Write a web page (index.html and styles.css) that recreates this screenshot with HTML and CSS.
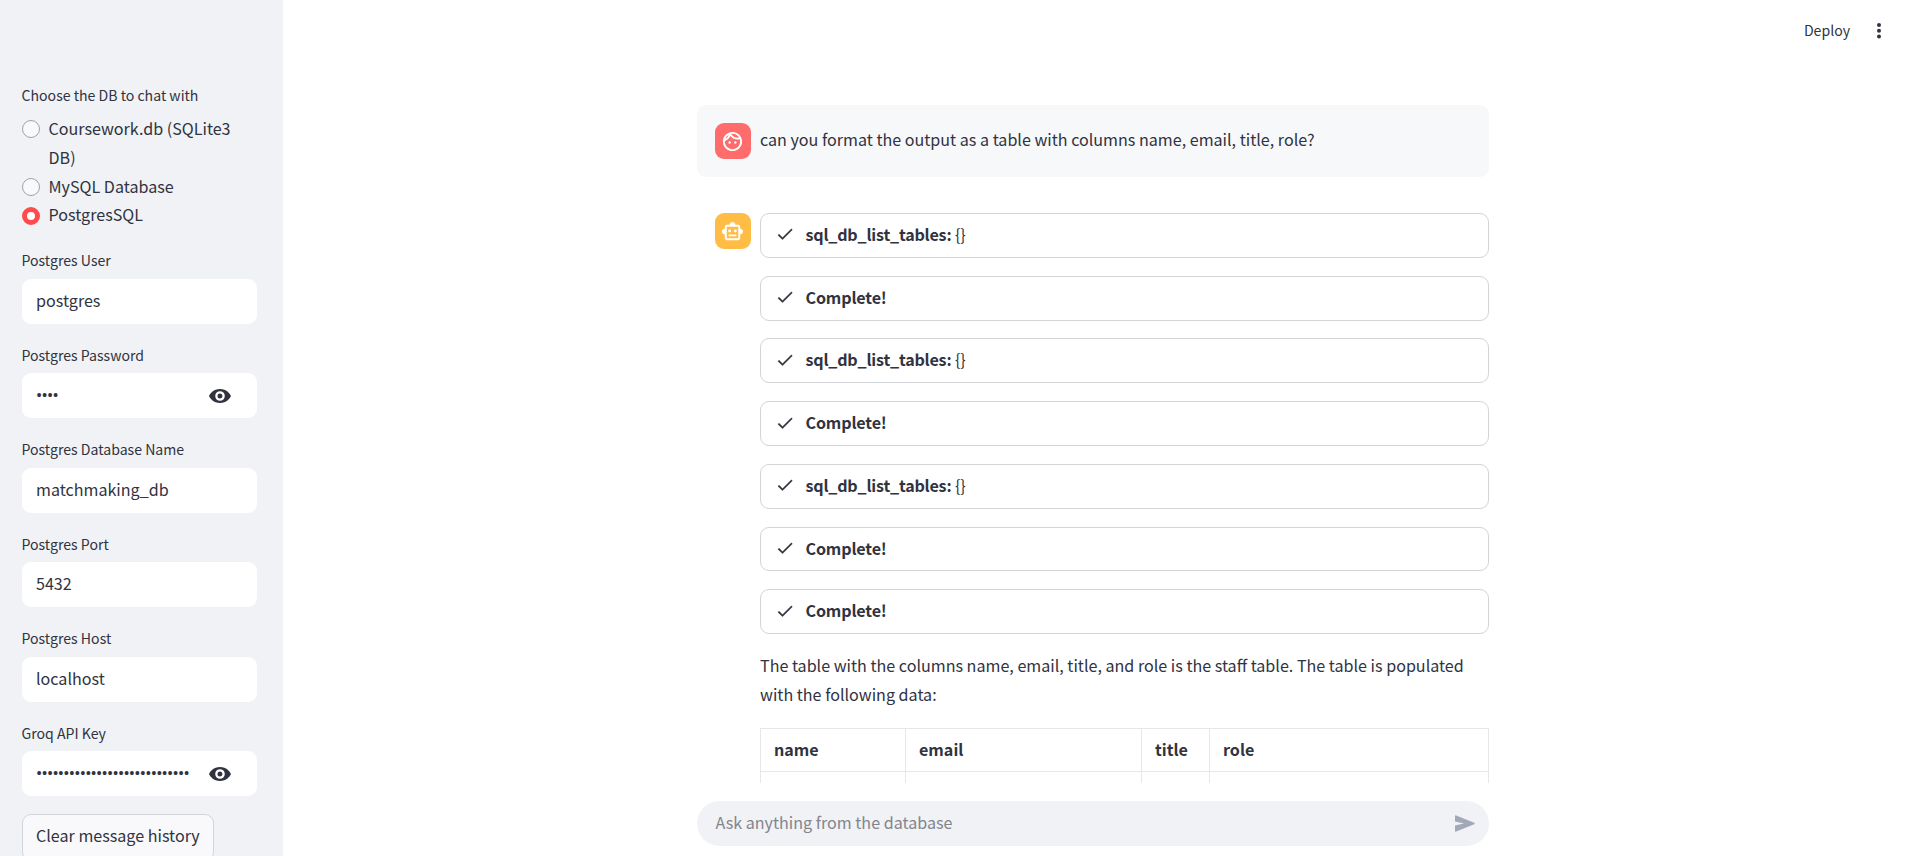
FILE: index.html
```html
<!DOCTYPE html>
<html lang="en">
<head>
<meta charset="utf-8">
<title>Chat with DB</title>
<link rel="stylesheet" href="styles.css">
</head>
<body>
<svg class="defs" width="0" height="0" aria-hidden="true">
  <symbol id="check" viewBox="0 0 24 24"><path d="M9 16.17 4.83 12l-1.42 1.41L9 19 21 7l-1.41-1.41z"/></symbol>
  <symbol id="eye" viewBox="0 0 22 14"><path d="M11 0C4.500 0 1.200 4.400 0 7c1.200 2.600 4.500 7 11 7s9.800-4.400 11-7C20.800 4.400 17.500 0 11 0zM11 2.200a4.800 4.800 0 1 1 0 9.600 4.800 4.800 0 0 1 0-9.600zM11 4.500a2.500 2.500 0 1 0 0 5 2.500 2.500 0 0 0 0-5z" fill-rule="evenodd"/></symbol>
</svg>
<div class="app">
  <aside class="sidebar">
    <div class="label">Choose the DB to chat with</div>
    <div class="radios">
      <div class="radio"><span class="dot"></span><span>Coursework.db (SQLite3 DB)</span></div>
      <div class="radio"><span class="dot"></span><span>MySQL Database</span></div>
      <div class="radio"><span class="dot on"></span><span>PostgresSQL</span></div>
    </div>
    <div class="field"><div class="label">Postgres User</div><div class="input">postgres</div></div>
    <div class="field"><div class="label">Postgres Password</div><div class="input"><span class="secret">••••</span><svg class="eye"><use href="#eye"/></svg></div></div>
    <div class="field"><div class="label">Postgres Database Name</div><div class="input">matchmaking_db</div></div>
    <div class="field"><div class="label">Postgres Port</div><div class="input">5432</div></div>
    <div class="field"><div class="label">Postgres Host</div><div class="input">localhost</div></div>
    <div class="field"><div class="label">Groq API Key</div><div class="input"><span class="secret">••••••••••••••••••••••••••••</span><svg class="eye"><use href="#eye"/></svg></div></div>
    <div class="button">Clear message history</div>
  </aside>
  <main class="main">
    <header class="header">
      <span class="deploy">Deploy</span>
      <svg class="more" viewBox="0 0 6 18"><circle cx="3" cy="3" r="2"/><circle cx="3" cy="8.8" r="2"/><circle cx="3" cy="14.6" r="2"/></svg>
    </header>
    <section class="chat">
      <div class="message user">
        <div class="avatar red"><svg viewBox="0 0 24 24"><path d="M10.25 13a1.25 1.25 0 1 1-2.5 0 1.25 1.25 0 0 1 2.5 0zM15 11.75a1.25 1.25 0 1 0 0 2.5 1.25 1.25 0 0 0 0-2.5zM22 12c0 5.52-4.48 10-10 10S2 17.52 2 12 6.48 2 12 2s10 4.48 10 10zM10.66 4.12C12.06 6.44 14.6 8 17.5 8c.46 0 .91-.05 1.34-.12C17.44 5.56 14.9 4 12 4c-.46 0-.91.05-1.34.12zM4.42 9.47a8.05 8.05 0 0 0 3.66-4.44 8.05 8.05 0 0 0-3.66 4.44zM20 12c0-.78-.12-1.53-.33-2.24-.7.15-1.42.24-2.17.24a10 10 0 0 1-7.76-3.69A10.02 10.02 0 0 1 4 11.86V12c0 4.41 3.59 8 8 8s8-3.590 8-8z" fill-rule="evenodd"/></svg></div>
        <p class="text">can you format the output as a table with columns name, email, title, role?</p>
      </div>
      <div class="message">
        <div class="avatar orange"><svg viewBox="0 0 24 24"><path d="M20 9V7c0-1.100-.9-2-2-2h-3c0-1.660-1.340-3-3-3S9 3.340 9 5H6c-1.100 0-2 .9-2 2v2c-1.660 0-3 1.340-3 3s1.340 3 3 3v4c0 1.100.9 2 2 2h12c1.100 0 2-.9 2-2v-4c1.660 0 3-1.340 3-3s-1.340-3-3-3zm-2 10H6V7h12v12zm-9-6a1.500 1.500 0 1 1 0-3 1.500 1.500 0 0 1 0 3zm7.500-1.500a1.500 1.500 0 1 1-3 0 1.500 1.500 0 0 1 3 0zM8 15h8v2H8z" fill-rule="evenodd"/></svg></div>
        <div class="content">
          <div class="status"><svg><use href="#check"/></svg><b class="tool">sql_db_list_tables:</b><span class="args">{}</span></div>
          <div class="status"><svg><use href="#check"/></svg><b>Complete!</b></div>
          <div class="status"><svg><use href="#check"/></svg><b class="tool">sql_db_list_tables:</b><span class="args">{}</span></div>
          <div class="status"><svg><use href="#check"/></svg><b>Complete!</b></div>
          <div class="status"><svg><use href="#check"/></svg><b class="tool">sql_db_list_tables:</b><span class="args">{}</span></div>
          <div class="status"><svg><use href="#check"/></svg><b>Complete!</b></div>
          <div class="status"><svg><use href="#check"/></svg><b>Complete!</b></div>
          <p class="text answer">The table with the columns name, email, title, and role is the staff table. The table is populated<br>with the following data:</p>
          <table class="table">
            <colgroup><col class="c-name"><col class="c-email"><col class="c-title"><col></colgroup>
            <tr><th>name</th><th>email</th><th>title</th><th>role</th></tr>
            <tr><td></td><td></td><td></td><td></td></tr>
          </table>
        </div>
      </div>
    </section>
    <footer class="footer">
      <div class="ask"><span>Ask anything from the database</span>
        <svg class="send" viewBox="0 0 20 18"><path d="M0 1.200Q0 0 1.200.4L19.200 7.800Q20.400 8.500 19.200 9.200L1.200 16.600Q0 17 0 15.800V10.600L9 8.500 0 6.400z"/></svg>
      </div>
    </footer>
  </main>
</div>
</body>
</html>
```
FILE: styles.css
```css
* { box-sizing: border-box; }
body {
  margin: 0;
  background: #fff;
  color: #31333f;
  font-family: "Noto Sans CJK SC", "Noto Sans", sans-serif;
  font-size: 16.1px;
  line-height: 28.8px;
}
.defs { position: absolute; }
.app { display: flex; height: 856px; overflow: hidden; }
.sidebar {
  width: 283px;
  flex: none;
  height: 856px;
  overflow: hidden;
  padding: 82px 26px 0 22px;
  background: #f0f2f6;
}
.label { margin-left: -0.5px; font-size: 14.1px; line-height: 26px; height: 31.5px; }
.radios { margin-bottom: 17.4px; padding-top: 1px; }
.radio { display: flex; gap: 8.5px; width: 228px; }
.radio span:last-child { margin-top: -0.6px; margin-bottom: 0.7px; }
.dot {
  flex: none;
  width: 18px;
  height: 18px;
  margin-top: 5.8px;
  border-radius: 50%;
  background: #f9f9fb;
  border: 1px solid #9fa2ab;
}
.radio .dot.on { background: #fff; border: 5.5px solid #ff4b4b; }
.field { margin-bottom: 18px; }
.input {
  display: flex;
  align-items: center;
  height: 45px;
  padding: 0 26.500px 2px 14px;
  border-radius: 9px;
  background: #fff;
}
.secret { font-family: Roboto, sans-serif; font-size: 18.5px; letter-spacing: -0.78px; padding-top: 2.500px; }
.eye { width: 22px; height: 14px; margin-left: auto; margin-top: 1.6px; fill: #31333f; }
.button {
  width: 192px;
  height: 47px;
  padding: 6px 0 0 13px;
  border: 1px solid #d3d5d9;
  border-radius: 9px;
  background: #f9f9fb;
  white-space: nowrap;
}
.main { flex: 1; display: flex; flex-direction: column; padding-right: 9px; }
.header {
  display: flex;
  justify-content: flex-end;
  align-items: center;
  flex: none;
  height: 62px;
  padding-right: 21px;
  gap: 26px;
}
.deploy { font-size: 14.1px; padding-bottom: 2px; }
.more { width: 6px; height: 18px; fill: #31333f; }
.chat { width: 792px; height: 721px; margin: 0 auto; padding-top: 43px; overflow: hidden; }
.message { display: flex; gap: 9px; padding: 18px 0 18px 18px; }
.message.user { height: 72px; padding-right: 18px; margin-bottom: 18px; border-radius: 9px; background: #f7f8fa; }
.avatar {
  display: flex;
  align-items: center;
  justify-content: center;
  flex: none;
  width: 36px;
  height: 36px;
  border-radius: 9px;
}
.avatar svg { width: 23px; height: 23px; margin-right: 1px; fill: #fff; }
.red { background: #ff6c6c; }
.orange { background: #ffbd45; }
.text { margin: 0; white-space: nowrap; }
.message.user .text { padding-top: 2px; }
.answer { margin-top: -1px; margin-bottom: 1px; }
.content { width: 729px; display: flex; flex-direction: column; gap: 17.95px; }
.status {
  display: flex;
  align-items: center;
  height: 44.8px;
  padding: 0 0 2px 14.3px;
  border: 1px solid #d3d4d8;
  border-radius: 9px;
}
.status svg { width: 20px; height: 20px; margin-right: 10.2px; fill: #31333f; stroke: #31333f; stroke-width: 0.2px; }
.status b { font-weight: 600; letter-spacing: -0.15px; }
.status .tool { letter-spacing: -0.2px; }
.args { margin-left: 3.500px; }
.table { table-layout: fixed; width: 729px; margin-top: 0.3px; border-collapse: collapse; }
.table th, .table td {
  height: 43px;
  padding: 0 13.5px 2px 13px;
  border: 1px solid #e6e7ea;
  text-align: left;
}
.table th { font-weight: 700; }
.c-name { width: 145px; }
.c-email { width: 236px; }
.c-title { width: 68px; }
.footer { display: flex; justify-content: center; padding-top: 18px; }
.ask {
  display: flex;
  align-items: center;
  justify-content: space-between;
  width: 792px;
  height: 45px;
  padding: 0 14px 0 18.500px;
  border-radius: 23px;
  background: #f0f2f6;
  color: #83858d;
}
.ask span { padding-bottom: 3px; }
.send { width: 20px; height: 18px; fill: #a3a8b8; }
```
